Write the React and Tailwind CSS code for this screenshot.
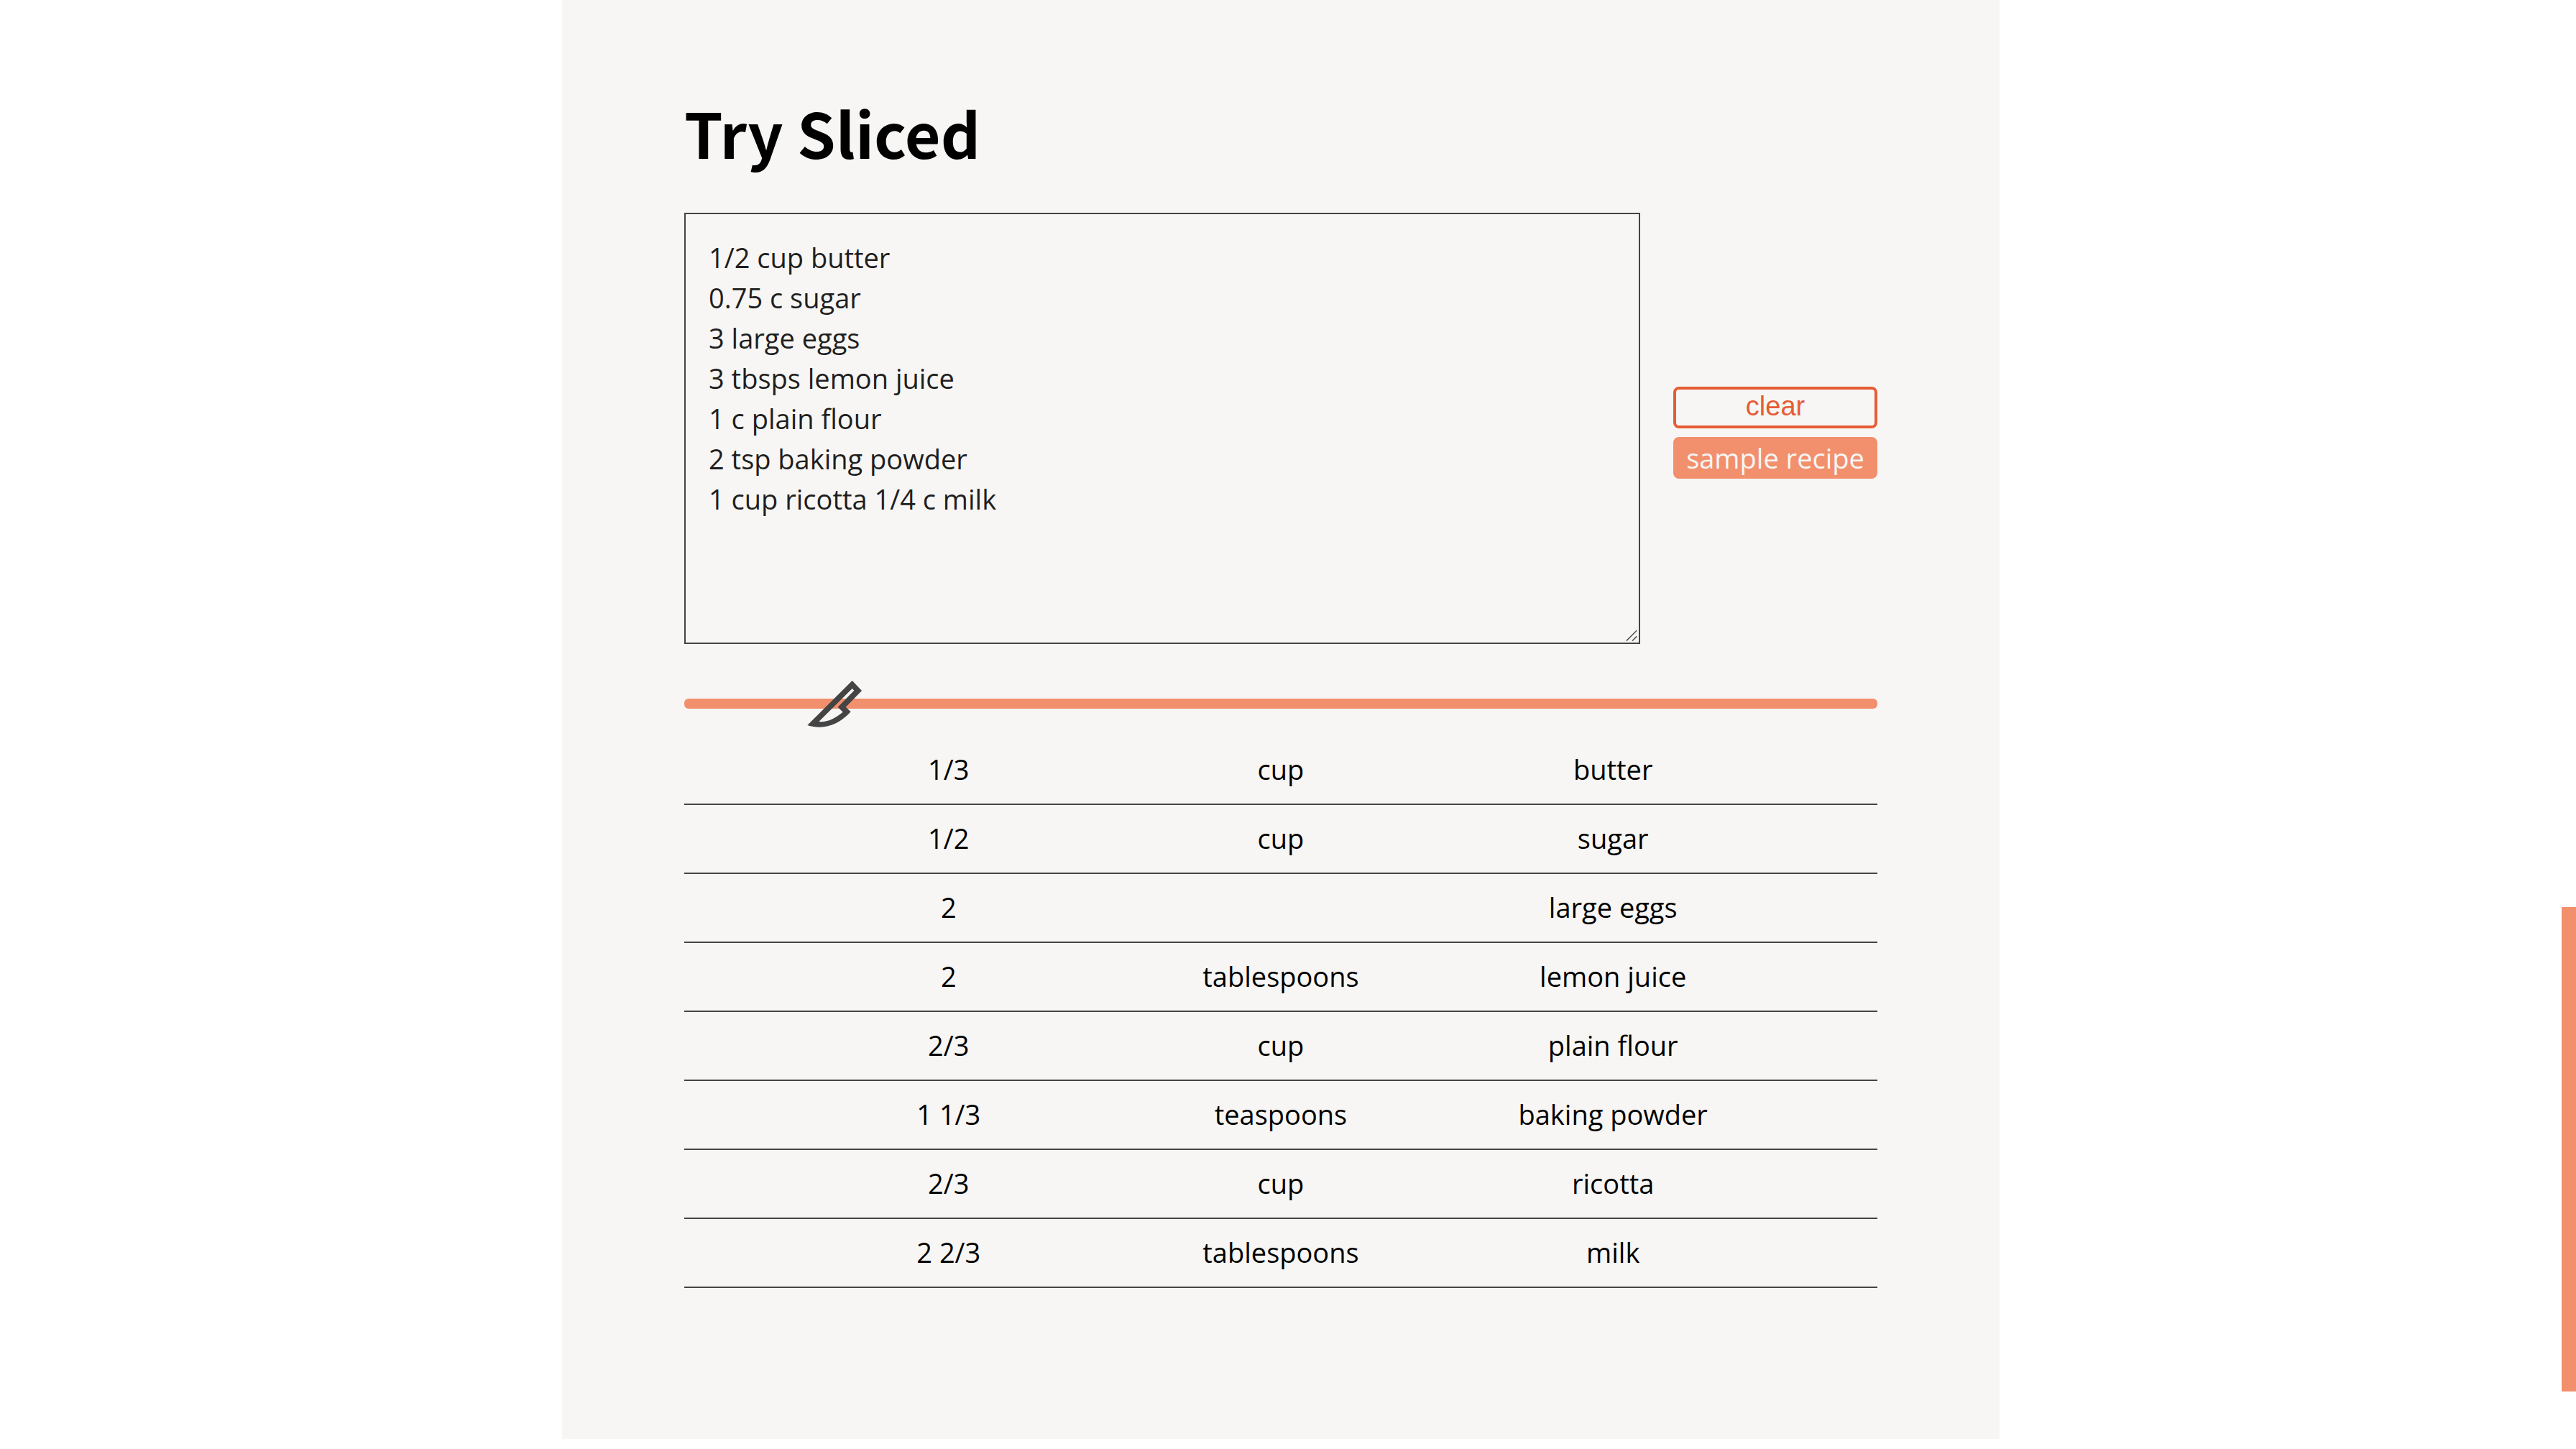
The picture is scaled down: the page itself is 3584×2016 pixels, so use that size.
import { useState } from "react";

const SAMPLE = `1/2 cup butter
0.75 c sugar
3 large eggs
3 tbsps lemon juice
1 c plain flour
2 tsp baking powder
1 cup ricotta 1/4 c milk`;

const ROWS = [
  ["1/3", "cup", "butter"],
  ["1/2", "cup", "sugar"],
  ["2", "", "large eggs"],
  ["2", "tablespoons", "lemon juice"],
  ["2/3", "cup", "plain flour"],
  ["1 1/3", "teaspoons", "baking powder"],
  ["2/3", "cup", "ricotta"],
  ["2 2/3", "tablespoons", "milk"],
];

const SCALE_MAX = 1000;

function RecipeInput({ value, onChange }) {
  return (
    <div className="relative min-w-0 flex-1">
      <textarea
        aria-label="Recipe ingredients"
        spellCheck={false}
        value={value}
        onChange={(e) => onChange(e.target.value)}
        className="block h-[600px] w-full resize-y border-2 border-[#444444] bg-transparent p-8 text-[38px] leading-[56px] text-[#1f1f1f] outline-none [&::-webkit-resizer]:hidden"
      />
      <svg
        aria-hidden="true"
        viewBox="0 0 16 16"
        className="pointer-events-none absolute right-1 bottom-1 h-4 w-4"
        fill="none"
        stroke="#555555"
        strokeWidth="1.6"
      >
        <path d="M0.8 15.6 L15.2 1.2 M9 15.6 L15.2 9.4" />
      </svg>
    </div>
  );
}

function KnifeSlider({ value, onChange }) {
  const ratio = value / SCALE_MAX;
  return (
    <div className="relative h-20">
      <input
        type="range"
        aria-label="Recipe scale"
        min="0"
        max={SCALE_MAX}
        value={value}
        onChange={(e) => onChange(Number(e.target.value))}
        className="block h-20 w-full cursor-pointer appearance-none bg-transparent outline-none [&::-webkit-slider-runnable-track]:h-3.5 [&::-webkit-slider-runnable-track]:rounded-md [&::-webkit-slider-runnable-track]:bg-[#f28f6c] [&::-webkit-slider-thumb]:h-3.5 [&::-webkit-slider-thumb]:w-20 [&::-webkit-slider-thumb]:appearance-none [&::-webkit-slider-thumb]:bg-transparent"
      />
      <svg
        aria-hidden="true"
        viewBox="0 -1 80 80"
        className="pointer-events-none absolute top-0 h-20 w-20"
        style={{ left: `calc(${ratio} * (100% - 80px))` }}
      >
        <path
          fill="#444444"
          fillRule="evenodd"
          d="M2.3 69 L64.7 7 L78 21 L55.7 43.7 L62.7 50.3 C45 69 25 76 2.3 69 Z M18.3 64 L64.7 18 L67.3 20.7 L44.7 43.7 L51.7 50.7 C40 60 30 65 18.3 64 Z"
        />
      </svg>
    </div>
  );
}

function IngredientTable() {
  return (
    <table className="w-full table-fixed border-separate border-spacing-0 text-center text-[38px] leading-[56px] text-black">
      <colgroup>
        <col className="w-[36%]" />
        <col className="w-[28%]" />
        <col className="w-[36%]" />
      </colgroup>
      <tbody>
        {ROWS.map(([amount, unit, name]) => (
          <tr key={name}>
            <td className="border-b-2 border-[#444444] pt-[18px] pb-5 pl-[138px]">{amount}</td>
            <td className="border-b-2 border-[#444444] pt-[18px] pb-5">{unit}</td>
            <td className="border-b-2 border-[#444444] pt-[18px] pb-5 pr-[138px]">{name}</td>
          </tr>
        ))}
      </tbody>
    </table>
  );
}

export default function App() {
  const [recipe, setRecipe] = useState(SAMPLE);
  const [scale, setScale] = useState(107);

  return (
    <div className="flex min-h-screen bg-white font-['Open_Sans',sans-serif]">
      <main className="min-w-0 flex-1">
        <section className="mx-auto w-full max-w-[2000px] bg-[#f7f6f4] px-[170px] pt-32 pb-[210px]">
          <h1 className="mb-14 font-['Noto_Sans_CJK_JP',sans-serif] text-[86px] leading-[112px] font-bold text-black">
            Try Sliced
          </h1>

          <div className="flex items-center gap-[46px]">
            <RecipeInput value={recipe} onChange={setRecipe} />
            <div className="w-[284px] shrink-0">
              <button
                type="button"
                onClick={() => setRecipe("")}
                className="mt-3 block h-[58px] w-full cursor-pointer rounded-lg border-4 border-[#e55c35] pb-1 font-['Liberation_Sans',sans-serif] text-[38px] leading-[46px] text-[#e55c35]"
              >
                clear
              </button>
              <button
                type="button"
                onClick={() => setRecipe(SAMPLE)}
                className="mt-3 block h-[58px] w-full cursor-pointer rounded-lg bg-[#f28f6c] text-[38px] leading-[58px] whitespace-nowrap text-[#f7f6f4]"
              >
                sample recipe
              </button>
            </div>
          </div>

          <div className="mt-[43px] mb-[5px]">
            <KnifeSlider value={scale} onChange={setScale} />
          </div>

          <IngredientTable />
        </section>
      </main>

      <div aria-hidden="true" className="sticky top-0 flex h-screen w-5 shrink-0 flex-col">
        <div className="flex-[1262]" />
        <div className="flex-[674] bg-[#f28f6c]" />
        <div className="flex-[80]" />
      </div>
    </div>
  );
}
